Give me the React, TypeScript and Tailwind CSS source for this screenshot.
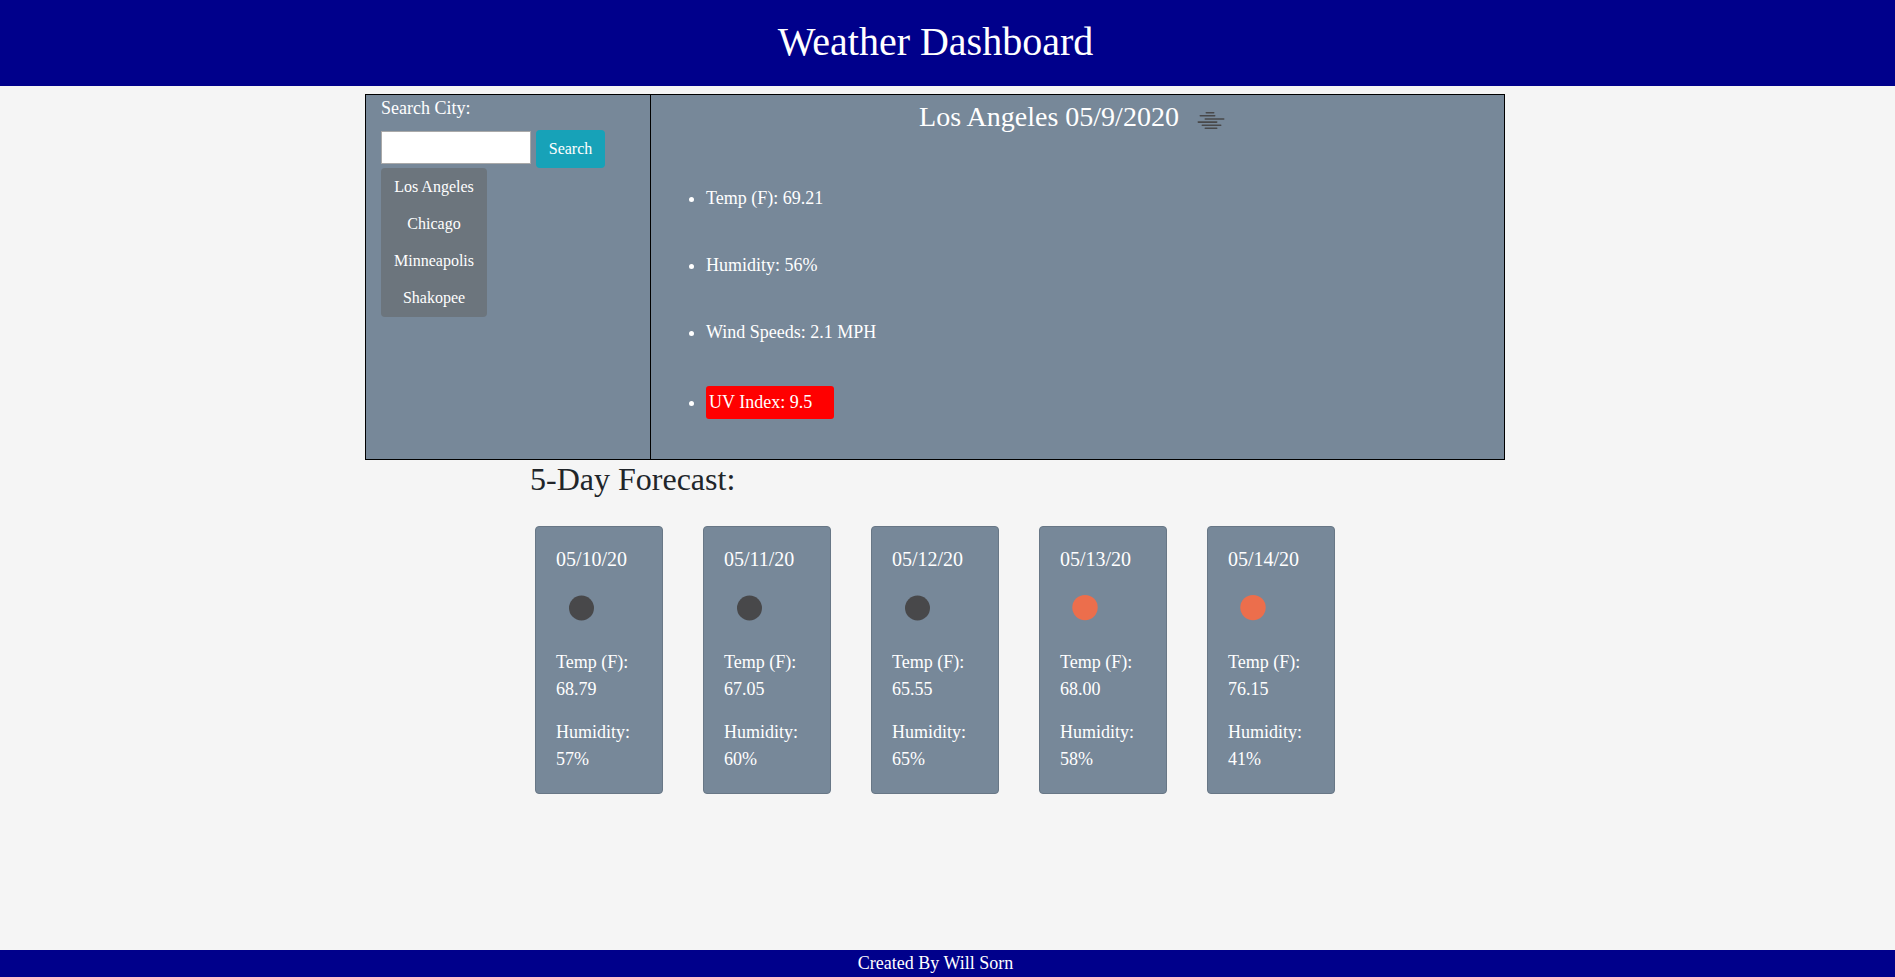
const cities = ["Los Angeles", "Chicago", "Minneapolis", "Shakopee"];

const days = [
  { date: "05/10/20", temp: "68.79", humidity: "57%", clear: false },
  { date: "05/11/20", temp: "67.05", humidity: "60%", clear: false },
  { date: "05/12/20", temp: "65.55", humidity: "65%", clear: false },
  { date: "05/13/20", temp: "68.00", humidity: "58%", clear: true },
  { date: "05/14/20", temp: "76.15", humidity: "41%", clear: true },
];

function MistIcon() {
  return (
    <svg width="50" height="50" viewBox="0 0 50 50" className="shrink-0" stroke="#48484a" strokeWidth="1.6" strokeLinecap="round">
      <path d="M20.3 17.7h7.4M14.3 20.8h14.4M19.3 24h18.4M12.3 27.1h18.4M16.3 30.2h18.4M19.3 33.3h11.4" />
    </svg>
  );
}

function SkyIcon({ clear }: { clear: boolean }) {
  return (
    <svg width="50" height="50" viewBox="0 0 50 50" className="block">
      {clear ? <circle cx="25" cy="24.6" r="12.7" fill="#ec6e4c" /> : <circle cx="25.5" cy="25" r="12.5" fill="#48484a" />}
    </svg>
  );
}

export default function App() {
  return (
    <div className="flex h-[977px] w-full flex-col bg-[#f5f5f5] font-['Liberation_Serif',serif] text-lg leading-[27px] text-white">
      <header className="h-[86px] bg-[#00008b] pt-[18px] pr-6">
        <h1 className="text-center text-[40px] leading-[48px]">Weather Dashboard</h1>
      </header>

      <main className="mt-2 flex w-[1870px] flex-1 flex-col items-center">
        <section className="flex h-[366px] w-[1140px] border border-black bg-[#778899]">
          <div className="w-[284px] px-[15px]">
            <p className="mb-2">Search City:</p>
            <div className="flex items-start gap-[5px]">
              <input className="mt-px h-[33px] w-[150px] border border-[#a9a9a9] bg-white text-black" />
              <button className="h-[38px] w-[69px] rounded bg-[#17a2b8] text-base">Search</button>
            </div>
            <div className="flex w-[106px] flex-col rounded bg-[#6c757d]">
              {cities.map((c) => (
                <button key={c} className="h-[37.25px] text-base">{c}</button>
              ))}
            </div>
          </div>
          <div className="flex-1 border-l border-black px-[15px]">
            <h2 className="flex items-start justify-center text-[28px] leading-[43px]">
              <span>Los Angeles 05/9/2020</span>
              <span className="ml-[7px]"><MistIcon /></span>
            </h2>
            <ul className="mt-10 list-disc pl-10">
              <li className="mb-10">Temp (F): 69.21</li>
              <li className="mb-10">Humidity: 56%</li>
              <li className="mb-10">Wind Speeds: 2.1 MPH</li>
              <li>
                <div className="w-32 rounded-[3px] bg-[#ff0000] p-[3px]">UV Index: 9.5</div>
              </li>
            </ul>
          </div>
        </section>

        <section className="w-[810px]">
          <h2 className="text-[32px] leading-[38px] text-[#212529]">5-Day Forecast:</h2>
          <div className="mt-7 flex gap-10 pl-[5px]">
            {days.map((d) => (
              <article key={d.date} className="h-[268px] w-32 rounded border border-[#687786] bg-[#778899] px-5 pt-5">
                <h3 className="text-xl leading-6">{d.date}</h3>
                <div className="mt-3"><SkyIcon clear={d.clear} /></div>
                <p className="mt-4">Temp (F):<br />{d.temp}</p>
                <p className="mt-4">Humidity:<br />{d.humidity}</p>
              </article>
            ))}
          </div>
        </section>
      </main>

      <footer className="h-[27px] bg-[#00008b] pr-6 text-center">Created By Will Sorn</footer>
    </div>
  );
}
